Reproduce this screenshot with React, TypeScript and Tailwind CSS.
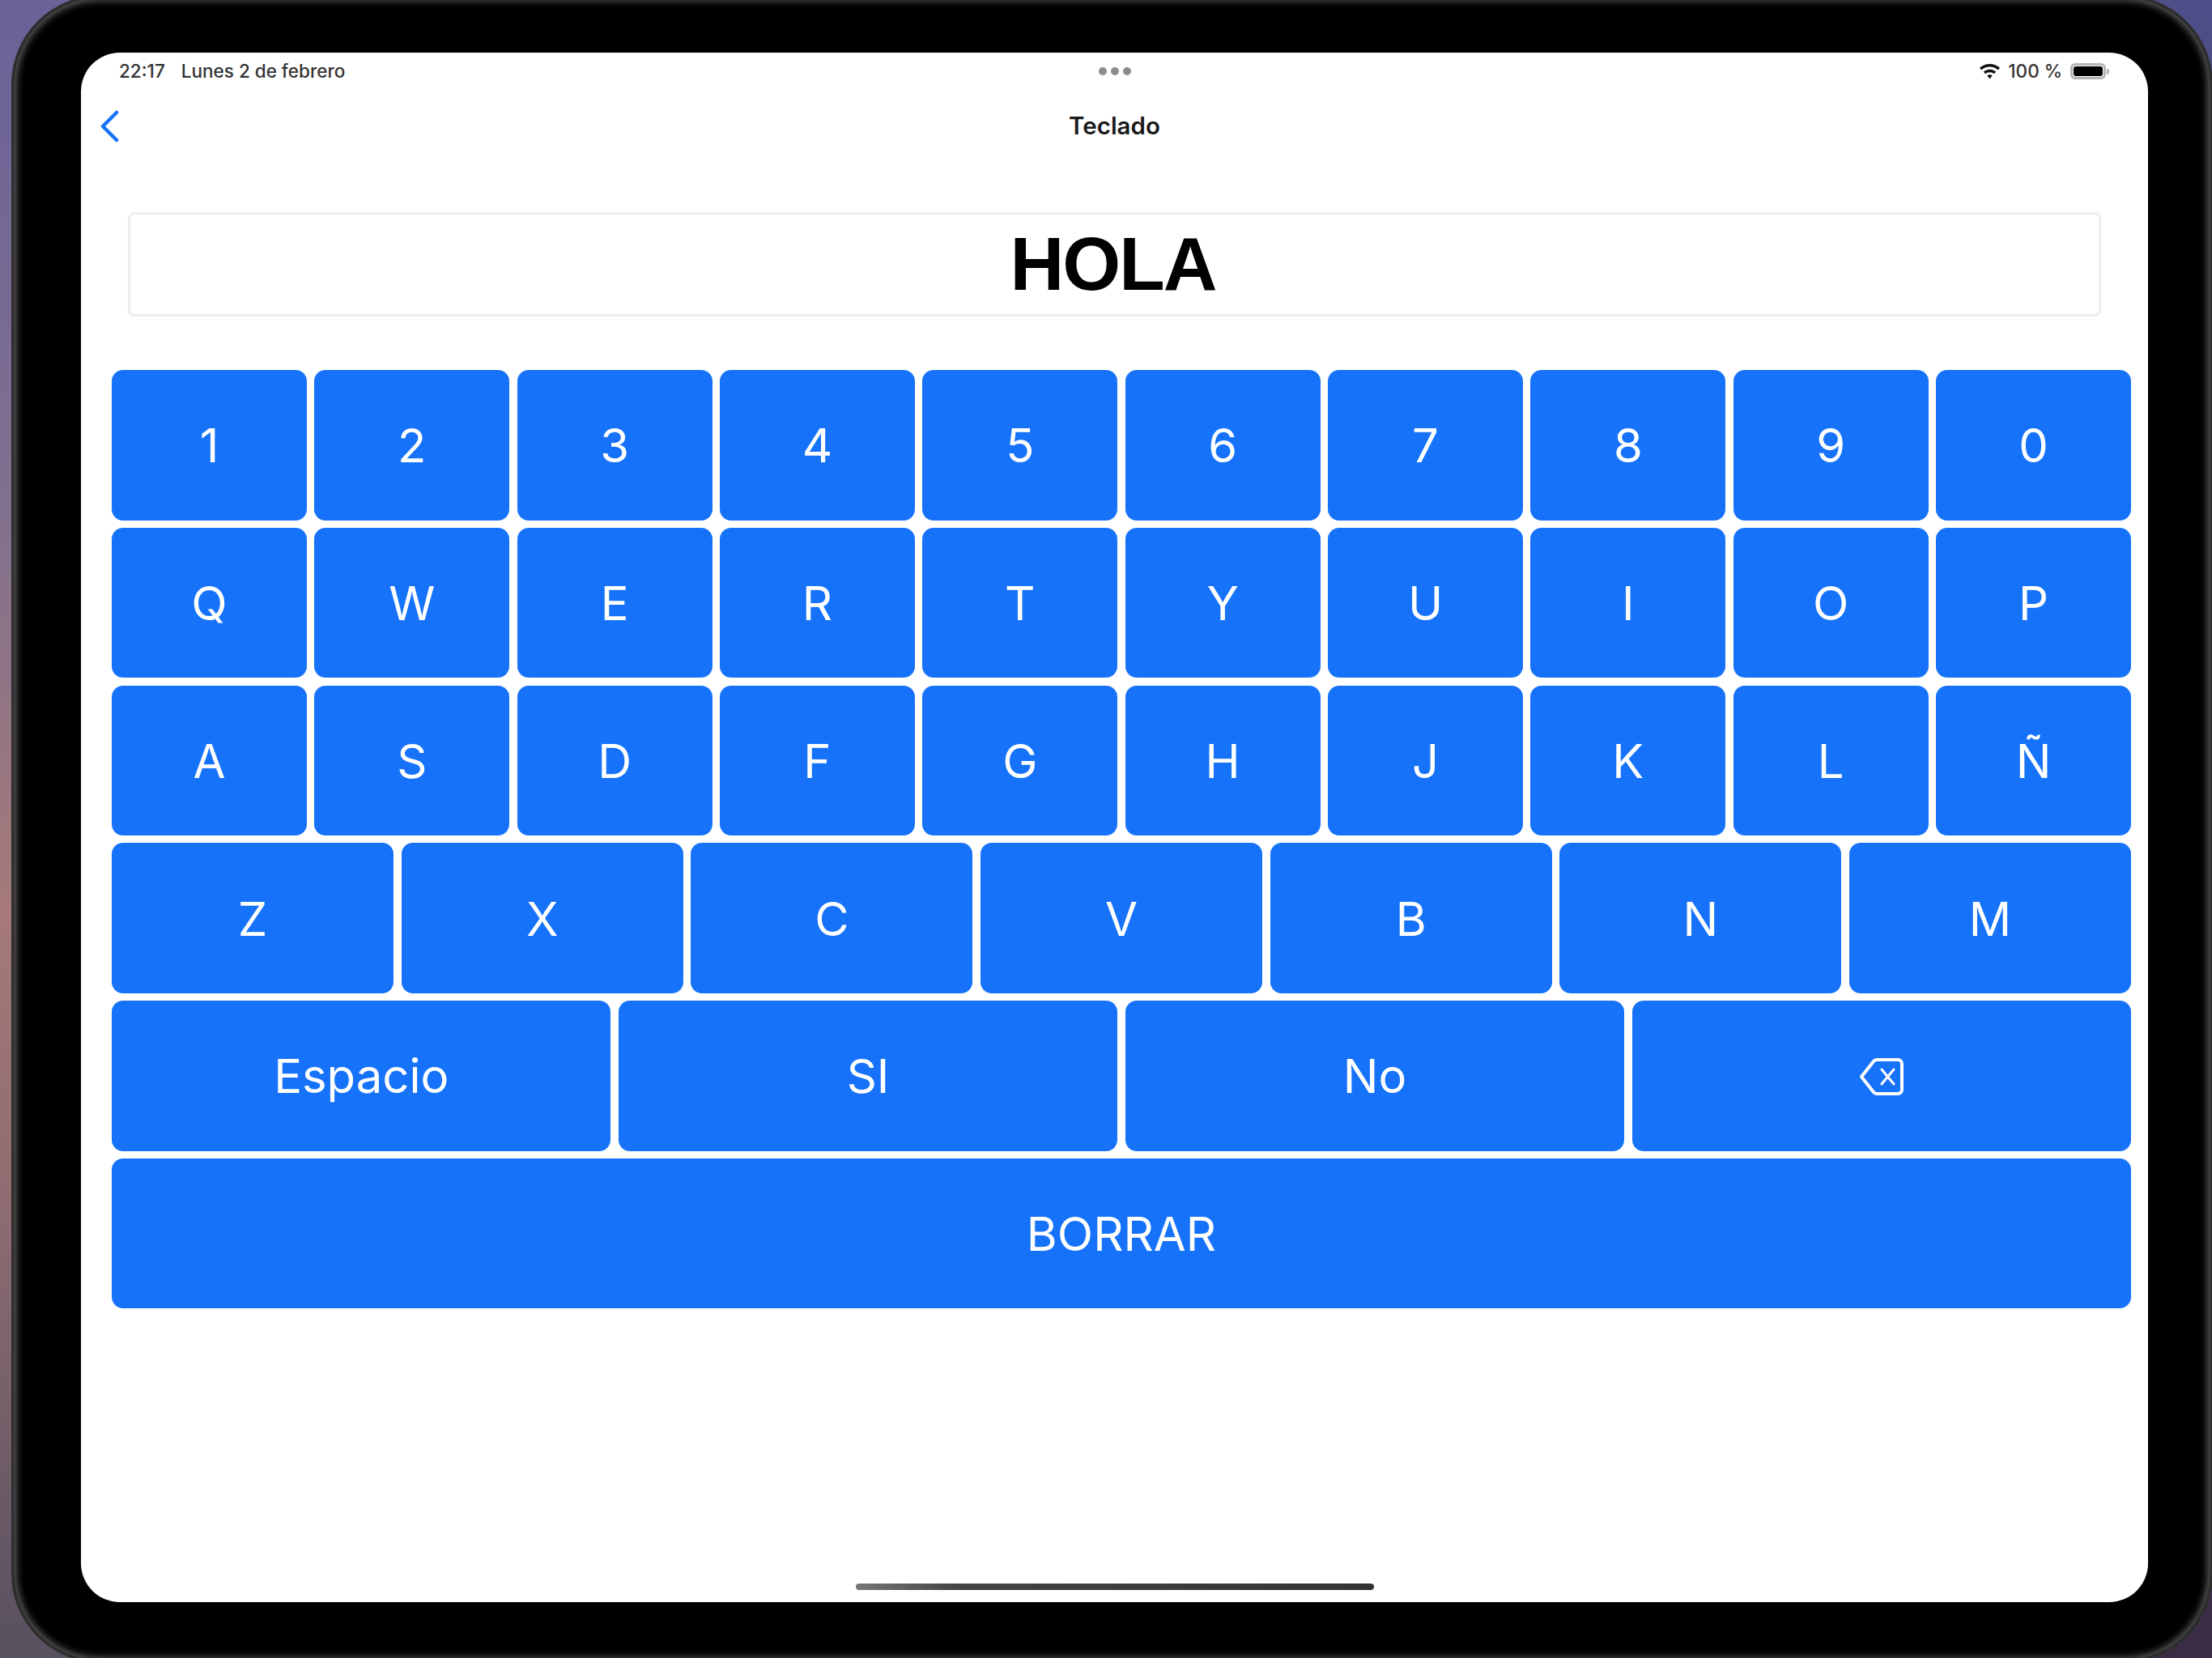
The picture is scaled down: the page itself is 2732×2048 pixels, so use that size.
import React from 'react';

const ROW_DIGITS = ['1', '2', '3', '4', '5', '6', '7', '8', '9', '0'];
const ROW_TOP = ['Q', 'W', 'E', 'R', 'T', 'Y', 'U', 'I', 'O', 'P'];
const ROW_MID = ['A', 'S', 'D', 'F', 'G', 'H', 'J', 'K', 'L', 'Ñ'];
const ROW_LOW = ['Z', 'X', 'C', 'V', 'B', 'N', 'M'];

const Key = ({ children }: { children: React.ReactNode }) => (
  <button className="flex h-[185.5px] min-w-0 flex-1 items-center justify-center rounded-[14px] bg-[#1673f9] pt-[2px] text-[58px] font-normal text-white">
    {children}
  </button>
);

const Row = ({ keys }: { keys: string[] }) => (
  <div className="flex gap-[9.5px]">
    {keys.map((k) => (
      <Key key={k}>{k}</Key>
    ))}
  </div>
);

const BackspaceIcon = () => (
  <svg width="56" height="48" viewBox="0 0 56 48" fill="none" stroke="white" strokeWidth="4" strokeLinejoin="round" strokeLinecap="round">
    <path d="M22 3h26a5 5 0 0 1 5 5v32a5 5 0 0 1-5 5H22a5 5 0 0 1-4-2L3 24 18 5a5 5 0 0 1 4-2z" />
    <path d="M28 15l15 18M43 15L28 33" strokeWidth="3" />
  </svg>
);

const WifiIcon = () => (
  <svg width="25" height="19" viewBox="0 0 25 19" fill="#111">
    <path d="M12.5 0C7.8 0 3.5 1.8 0 4.8l2.3 2.6c2.8-2.4 6.3-3.8 10.2-3.8s7.400 1.400 10.200 3.800L25 4.800C21.500 1.800 17.200 0 12.500 0z" />
    <path d="M12.500 6.700c-2.900 0-5.600 1.100-7.700 2.900l2.300 2.600c1.400-1.300 3.300-2 5.400-2s4 .7 5.400 2l2.300-2.600c-2.100-1.800-4.800-2.900-7.700-2.900z" />
    <path d="M12.500 13.300c-1.200 0-2.300.5-3.100 1.200l3.100 3.900 3.100-3.900c-.8-.7-1.900-1.200-3.100-1.200z" />
  </svg>
);

const StatusBar = () => (
  <div className="relative flex h-[46px] items-center justify-between pl-[47px] pr-[48px] font-['Inter',sans-serif] text-[22.5px] font-medium text-[#333]">
    <div className="flex gap-[20px]">
      <span>22:17</span>
      <span>Lunes 2 de febrero</span>
    </div>
    <div className="absolute left-1/2 flex -translate-x-1/2 gap-[5px]">
      <span className="h-[10px] w-[10px] rounded-full bg-[#8c8c8c]" />
      <span className="h-[10px] w-[10px] rounded-full bg-[#8c8c8c]" />
      <span className="h-[10px] w-[10px] rounded-full bg-[#8c8c8c]" />
    </div>
    <div className="flex items-center gap-[10px]">
      <WifiIcon />
      <span>100 %</span>
      <div className="flex items-center">
        <div className="rounded-[6px] border-[3px] border-[#b5b5b5] p-[1px]">
          <div className="h-[12px] w-[36px] rounded-[3px] bg-black" />
        </div>
        <div className="ml-[1px] h-[7px] w-[3px] rounded-r-full bg-[#b5b5b5]" />
      </div>
    </div>
  </div>
);

const NavBar = () => (
  <div className="relative flex h-[90px] items-center justify-center font-['Inter',sans-serif]">
    <svg className="absolute left-[23px] top-[25px]" width="24" height="40" viewBox="0 0 24 40" fill="none" stroke="#1673f9" strokeWidth="4.5" strokeLinecap="round" strokeLinejoin="round">
      <path d="M21 3L4 20l17 17" />
    </svg>
    <span className="pb-[2px] text-[29.5px] font-semibold text-[#1a1a1a]">Teclado</span>
  </div>
);

export default function App() {
  return (
    <div className="h-[2048px] w-[2732px] overflow-hidden [background:linear-gradient(180deg,#4e4e88_0%,#4a4878_50%,#3a2c44_100%)_right/50%_100%_no-repeat,linear-gradient(180deg,#6a6298_0%,#80708f_30%,#a57a78_55%,#8a6a70_75%,#57505f_100%)_left/50%_100%_no-repeat]">
      <div className="ml-[14px] mt-[-6px] h-[2060px] w-[2719px] rounded-[110px] border-[3px] border-[#2e2e2e] bg-black pb-[72px] pl-[83px] pr-[77px] pt-[68px] shadow-[inset_0_0_9px_4px_#555555]">
        <div className="relative flex h-[1914px] flex-col rounded-[48px] bg-white">
          <StatusBar />
          <NavBar />
          <div className="mx-[58px] mt-[61px] flex h-[129px] items-center justify-center rounded-[8px] border-[3px] border-[#eeeeee] pr-[4px] font-['Liberation_Sans',sans-serif] text-[92.5px] font-bold tracking-[-2px] text-black">
            HOLA
          </div>
          <div className="ml-[38px] mr-[21px] mt-[66px] flex flex-col gap-[9.3px] font-['Inter',sans-serif]">
            <Row keys={ROW_DIGITS} />
            <Row keys={ROW_TOP} />
            <Row keys={ROW_MID} />
            <Row keys={ROW_LOW} />
            <div className="flex gap-[9.5px]">
              <Key>Espacio</Key>
              <Key>SI</Key>
              <Key>No</Key>
              <Key>
                <BackspaceIcon />
              </Key>
            </div>
            <div className="flex">
              <Key>BORRAR</Key>
            </div>
          </div>
          <div className="absolute bottom-[15px] left-1/2 h-[8px] w-[640px] -translate-x-1/2 rounded-full bg-[linear-gradient(90deg,#777777,#444444_20%,#333333)]" />
        </div>
      </div>
    </div>
  );
}
